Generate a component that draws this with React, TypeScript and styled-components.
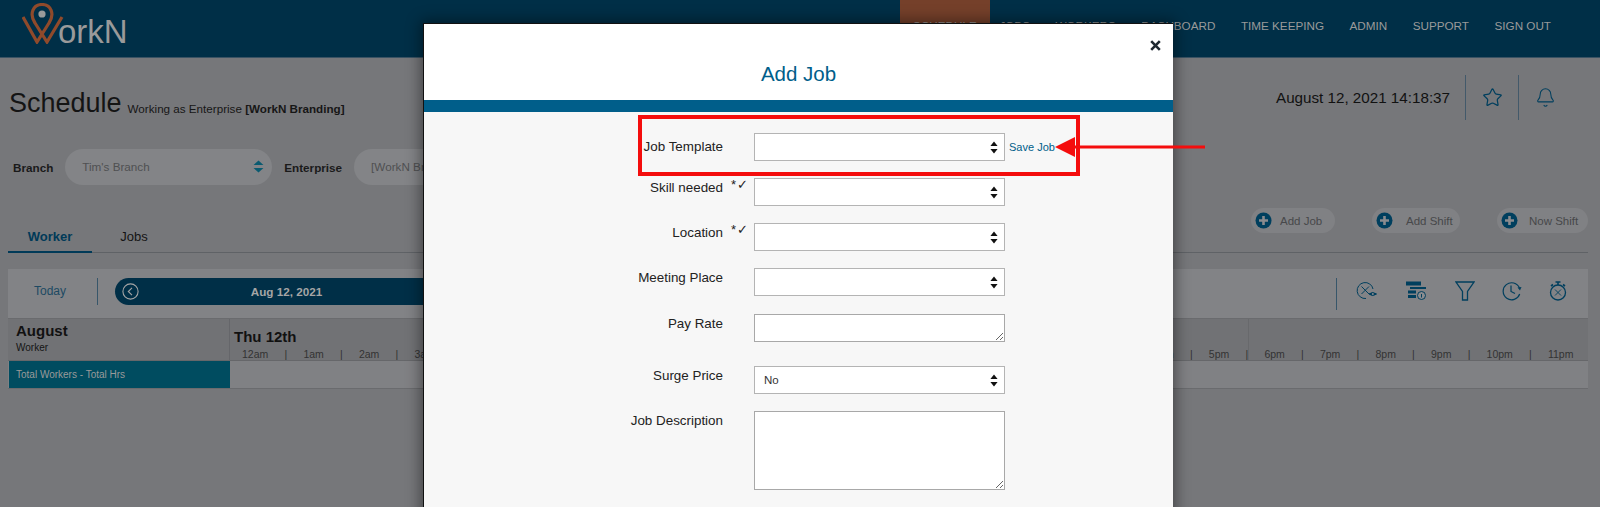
import { Fragment } from 'react';
import styled, { createGlobalStyle } from 'styled-components';
import { Star, Bell } from 'lucide-react';

const NAV_ITEMS = ['JOBS', 'WORKERS', 'DASHBOARD', 'TIME KEEPING', 'ADMIN', 'SUPPORT', 'SIGN OUT'];
const HOURS = [
  '12am', '1am', '2am', '3am', '4am', '5am', '6am', '7am', '8am', '9am', '10am', '11am',
  '12pm', '1pm', '2pm', '3pm', '4pm', '5pm', '6pm', '7pm', '8pm', '9pm', '10pm', '11pm',
];

const ICON = '#003f5e';

const SortArrows = ({ color = '#111', wide }: { color?: string; wide?: boolean }) => (
  <svg width={wide ? 11 : 8} height="13" viewBox="0 0 8 13" preserveAspectRatio="none">
    <path d="M4 0.5 L7.6 5 H0.4 Z M4 12.5 L0.4 8 H7.6 Z" fill={color} />
  </svg>
);

const AddIcon = () => (
  <svg width="17" height="17" viewBox="0 0 17 17">
    <circle cx="8.5" cy="8.5" r="8" fill="#003f5e" />
    <path d="M8.5 4 V13 M4 8.5 H13" stroke="#8a8b8e" strokeWidth="2.6" />
  </svg>
);

const Logo = () => (
  <svg width="42" height="41" viewBox="22 3 42 41" fill="none">
    <path
      d="M23 17 L37 42 L49 23 C55 14 51 4.5 42 4.5 C33 4.5 29 14 35 23 L47 42 L62 17"
      stroke="#8f4a2b"
      strokeWidth="3.2"
    />
    <circle cx="42" cy="14" r="3.6" fill="#9a9a9a" />
  </svg>
);

const HideIcon = () => (
  <svg width="22" height="20" viewBox="0 0 22 20" fill="none" stroke={ICON} strokeWidth="1">
    <path d="M17 8 A8 8 0 1 0 10 17.5" />
    <path d="M5.5 5.5 L13 13 M13 5.5 L5.5 13" />
    <path d="M13 13 Q16.5 10 20.5 13 Q16.5 16 13 13 Z" fill={ICON} />
    <circle cx="16.8" cy="13" r="1" fill="#8a8b8e" stroke="none" />
  </svg>
);

const BarsIcon = () => (
  <svg width="22" height="20" viewBox="0 0 22 20" fill={ICON}>
    <rect x="1" y="0.5" width="15" height="4" />
    <rect x="5" y="6" width="16" height="2" />
    <rect x="3" y="9.5" width="8" height="3" />
    <rect x="3" y="14" width="8" height="3" />
    <circle cx="16.5" cy="14.5" r="4" fill="#8a8b8e" stroke={ICON} strokeWidth="1" />
    <path d="M16.5 13 V16.5" stroke={ICON} strokeWidth="1" />
  </svg>
);

const FunnelIcon = () => (
  <svg width="20" height="20" viewBox="0 0 20 20" fill="none" stroke={ICON} strokeWidth="1.3">
    <path d="M1 1 H19 L12.5 10.5 V19 H7.5 V10.5 Z" />
  </svg>
);

const ClockIcon = () => (
  <svg width="20" height="20" viewBox="0 0 20 20" fill="none" stroke={ICON} strokeWidth="1.2">
    <path d="M17.5 7 A8.5 8.5 0 1 0 17.7 13" />
    <path d="M9 4.5 V10.5 L13 12.5" />
    <path d="M15.5 6.5 L19.5 6 L18 9.5 Z" fill={ICON} stroke="none" />
  </svg>
);

const TimerIcon = () => (
  <svg width="18" height="20" viewBox="0 0 18 20" fill="none" stroke={ICON} strokeWidth="1.3">
    <circle cx="9" cy="11.5" r="7.5" />
    <path d="M6 8.5 L12 14.5 M12 8.5 L6 14.5" strokeWidth="0.9" />
    <path d="M6.5 1 H11.5 M9 1 V4 M2 5 L4 3.5 M16 5 L14 3.5" strokeWidth="1.6" />
  </svg>
);

const PrevIcon = () => (
  <svg width="17" height="17" viewBox="0 0 17 17" fill="none" stroke="#a5a5a5" strokeWidth="1.1">
    <circle cx="8.5" cy="8.5" r="7.6" />
    <path d="M10 4.8 L6.3 8.5 L10 12.2" />
  </svg>
);

const Arrow = () => (
  <ArrowSvg width="152" height="22" viewBox="0 0 152 22">
    <path d="M20 11 H150" stroke="#f40d0d" strokeWidth="3" />
    <path d="M0 11 L20 1 V21 Z" fill="#f40d0d" />
  </ArrowSvg>
);

const App = () => {
  return (
    <Page>
      <GlobalStyle />
      <TopBar>
        <Brand>
          <Logo />
          <BrandText>orkN</BrandText>
        </Brand>
        <Nav>
          <ActiveNavItem>SCHEDULE</ActiveNavItem>
          {NAV_ITEMS.map((item) => (
            <NavItem key={item}>{item}</NavItem>
          ))}
        </Nav>
      </TopBar>

      <TitleRow>
        <Title>Schedule</Title>
        <Subtitle>
          Working as Enterprise <b>[WorkN Branding]</b>
        </Subtitle>
        <Status>
          <Clock>August 12, 2021 14:18:37</Clock>
          <HeaderIcon>
            <Star size={21} strokeWidth={1.4} />
          </HeaderIcon>
          <HeaderIcon>
            <Bell size={21} strokeWidth={1.2} />
          </HeaderIcon>
        </Status>
      </TitleRow>

      <FilterRow>
        <FilterLabel>Branch</FilterLabel>
        <FilterPill>
          Tim's Branch
          <SortArrows color="#0a5a70" wide />
        </FilterPill>
        <FilterLabel>Enterprise</FilterLabel>
        <FilterPill>[WorkN Branding]</FilterPill>
      </FilterRow>

      <TabRow>
        <ActiveTab>Worker</ActiveTab>
        <Tab>Jobs</Tab>
        <Actions>
          <ActionPill width={84} space={8}>
            <AddIcon />
            Add Job
          </ActionPill>
          <ActionPill width={88} space={13}>
            <AddIcon />
            Add Shift
          </ActionPill>
          <ActionPill width={91} space={11}>
            <AddIcon />
            Now Shift
          </ActionPill>
        </Actions>
      </TabRow>

      <Toolbar>
        <TodayButton>Today</TodayButton>
        <DatePill>
          <PrevIcon />
          <DateText>Aug 12, 2021</DateText>
        </DatePill>
        <ToolIcons>
          <HideIcon />
          <BarsIcon />
          <FunnelIcon />
          <ClockIcon />
          <TimerIcon />
        </ToolIcons>
      </Toolbar>

      <GridHeader>
        <MonthCell>
          <Month>August</Month>
          <MonthSub>Worker</MonthSub>
        </MonthCell>
        <DayCell>
          <DayName>Thu 12th</DayName>
          <Hours>
            {HOURS.map((hour, index) => (
              <Fragment key={hour}>
                <span>{hour}</span>
                {index < HOURS.length - 1 && <span>|</span>}
              </Fragment>
            ))}
          </Hours>
          <DayEnd />
        </DayCell>
      </GridHeader>
      <GridRow>
        <TotalCell>Total Workers - Total Hrs</TotalCell>
      </GridRow>

      <Modal>
        <ModalHead>
          <ModalTitle>Add Job</ModalTitle>
          <CloseButton>
            <svg width="11" height="11" viewBox="0 0 11 11">
              <path d="M1.2 1.2 L9.8 9.8 M9.8 1.2 L1.2 9.8" stroke="#1d2730" strokeWidth="2.6" />
            </svg>
          </CloseButton>
        </ModalHead>
        <ModalBar />
        <ModalBody>
          <Field top={21}>
            <FieldLabel offset={6}>Job Template</FieldLabel>
            <Marks />
            <SelectBox>
              <Select defaultValue="" aria-label="Job Template">
                <option value="" />
              </Select>
              <SelectArrow>
                <SortArrows />
              </SelectArrow>
            </SelectBox>
            <SaveLink>Save Job</SaveLink>
          </Field>
          <Field top={17}>
            <FieldLabel>Skill needed</FieldLabel>
            <Marks>*✓</Marks>
            <SelectBox>
              <Select defaultValue="" aria-label="Skill needed">
                <option value="" />
              </Select>
              <SelectArrow>
                <SortArrows />
              </SelectArrow>
            </SelectBox>
          </Field>
          <Field top={17}>
            <FieldLabel>Location</FieldLabel>
            <Marks>*✓</Marks>
            <SelectBox>
              <Select defaultValue="" aria-label="Location">
                <option value="" />
              </Select>
              <SelectArrow>
                <SortArrows />
              </SelectArrow>
            </SelectBox>
          </Field>
          <Field top={17}>
            <FieldLabel>Meeting Place</FieldLabel>
            <Marks />
            <SelectBox>
              <Select defaultValue="" aria-label="Meeting Place">
                <option value="" />
              </Select>
              <SelectArrow>
                <SortArrows />
              </SelectArrow>
            </SelectBox>
          </Field>
          <Field top={18}>
            <FieldLabel>Pay Rate</FieldLabel>
            <Marks />
            <TextArea height={28} aria-label="Pay Rate" />
          </Field>
          <Field top={24}>
            <FieldLabel>Surge Price</FieldLabel>
            <Marks />
            <SelectBox>
              <Select defaultValue="No" aria-label="Surge Price">
                <option value="No">No</option>
              </Select>
              <SelectArrow>
                <SortArrows />
              </SelectArrow>
            </SelectBox>
          </Field>
          <Field top={17}>
            <FieldLabel>Job Description</FieldLabel>
            <Marks />
            <TextArea height={79} aria-label="Job Description" />
          </Field>
        </ModalBody>
        <Highlight />
        <Arrow />
      </Modal>
    </Page>
  );
};
export default App;

const GlobalStyle = createGlobalStyle`
  html, body {
    margin: 0;
    height: 100%;
    overflow: hidden;
    background: #76777a;
  }
  * {
    box-sizing: border-box;
  }
  body {
    font-family: 'Liberation Sans', Arial, sans-serif;
  }
`;

const Page = styled.div`
  position: relative;
  height: 507px;
  overflow: hidden;
  color: #111;
`;

const TopBar = styled.div`
  display: flex;
  justify-content: space-between;
  height: 58px;
  background: #002f47;
  border-bottom: 1px solid #3a5364;
`;

const Brand = styled.div`
  display: flex;
  align-items: flex-end;
  padding: 3px 0 13px 22px;
`;

const BrandText = styled.div`
  margin-left: -6px;
  margin-bottom: -7px;
  font-size: 33px;
  font-weight: 400;
  color: #9a9a9a;
`;

const Nav = styled.div`
  display: flex;
  padding-right: 49px;
`;

const NavItem = styled.div`
  margin-left: 25.5px;
  padding-top: 18px;
  font-size: 11.7px;
  line-height: 16px;
  color: #9a9a9a;
`;

const ActiveNavItem = styled(NavItem)`
  width: 90px;
  margin-left: 0;
  margin-right: -16px;
  text-align: center;
  background: #75402a;
`;

const TitleRow = styled.div`
  display: flex;
  align-items: center;
  height: 90px;
  padding: 0 29px 0 9px;
`;

const Title = styled.div`
  margin-right: 6px;
  font-size: 27px;
  color: #141414;
`;

const Subtitle = styled.div`
  margin-top: 10px;
  font-size: 11.65px;
  color: #161616;
`;

const Status = styled.div`
  display: flex;
  align-items: center;
  margin-left: auto;
  margin-bottom: 12px;
`;

const Clock = styled.div`
  margin-right: 15px;
  font-size: 15.2px;
  color: #111;
`;

const HeaderIcon = styled.div`
  display: flex;
  align-items: center;
  justify-content: center;
  width: 53px;
  height: 45px;
  color: ${ICON};
  border-left: 1px solid #43596a;
`;

const FilterRow = styled.div`
  display: flex;
  align-items: center;
  height: 36px;
  margin-top: 1px;
  padding-left: 13px;
`;

const FilterLabel = styled.div`
  margin-right: 12px;
  font-size: 11.7px;
  font-weight: 700;
  color: #1a1a1a;
`;

const FilterPill = styled.div`
  display: flex;
  align-items: center;
  justify-content: space-between;
  width: 207px;
  height: 36px;
  margin-right: 12px;
  padding: 0 8px 2px 17px;
  font-size: 11.7px;
  color: #4f5052;
  background: #838487;
  border-radius: 18px;
`;

const TabRow = styled.div`
  display: flex;
  align-items: flex-end;
  height: 68px;
  margin: 0 12px 0 8px;
  border-bottom: 1px solid #5f6266;
`;

const Tab = styled.div`
  width: 84px;
  height: 25px;
  font-size: 13px;
  line-height: 20px;
  text-align: center;
  color: #141414;
`;

const ActiveTab = styled(Tab)`
  height: 26px;
  margin-bottom: -1px;
  font-weight: 700;
  color: #003a58;
  border-bottom: 2px solid #003a58;
`;

const Actions = styled.div`
  display: flex;
  gap: 37px;
  margin-left: auto;
  margin-bottom: 19px;
`;

const ActionPill = styled.div<{ width: number; space: number }>`
  display: flex;
  align-items: center;
  gap: ${({ space }) => space}px;
  width: ${({ width }) => width}px;
  height: 25px;
  padding-left: 4px;
  font-size: 11.5px;
  color: #47484a;
  background: #808184;
  border-radius: 13px;
`;

const Toolbar = styled.div`
  display: flex;
  align-items: center;
  height: 49px;
  margin: 16px 12px 0 8px;
  background: #828386;
`;

const TodayButton = styled.div`
  width: 90px;
  height: 27px;
  margin-bottom: 4px;
  padding-left: 26px;
  font-size: 12px;
  line-height: 27px;
  color: #1d4a63;
  border-right: 1px solid #37566a;
`;

const DatePill = styled.div`
  display: flex;
  align-items: center;
  width: 900px;
  height: 27px;
  margin: 0 0 4px 17px;
  padding-left: 7px;
  background: #002f47;
  border-radius: 14px 0 0 14px;
`;

const DateText = styled.div`
  width: 295px;
  font-size: 11.7px;
  font-weight: 700;
  text-align: center;
  color: #a5a5a5;
`;

const ToolIcons = styled.div`
  display: flex;
  align-items: center;
  justify-content: space-between;
  width: 252px;
  height: 32px;
  margin-left: auto;
  padding: 0 21px 5px 19px;
  border-left: 1px solid #37566a;
`;

const GridHeader = styled.div`
  display: flex;
  height: 43px;
  margin: 0 12px 0 8px;
  background: #717275;
  border-top: 1px solid #6a6b6e;
  border-bottom: 1px solid #66676a;
`;

const MonthCell = styled.div`
  width: 222px;
  padding: 3px 0 0 8px;
  border-right: 1px solid #65666a;
`;

const Month = styled.div`
  font-size: 15px;
  line-height: 17px;
  font-weight: 700;
  color: #111;
`;

const MonthSub = styled.div`
  margin-top: 2px;
  font-size: 10px;
  line-height: 13px;
  color: #141414;
`;

const DayCell = styled.div`
  position: relative;
  flex: 1;
  padding: 9px 14px 0 4px;
`;

const DayName = styled.div`
  font-size: 15px;
  line-height: 17px;
  font-weight: 700;
  color: #111;
`;

const Hours = styled.div`
  display: flex;
  justify-content: space-between;
  margin: 3px 0 0 8px;
  font-size: 10.5px;
  line-height: 13px;
  color: #333;
`;

const DayEnd = styled.div`
  position: absolute;
  top: 0;
  bottom: 0;
  left: 1018px;
  width: 1px;
  background: #68696c;
`;

const GridRow = styled.div`
  display: flex;
  height: 28px;
  margin: 0 12px 0 8px;
  background: #808184;
  border-bottom: 1px solid #6a6b6e;
`;

const TotalCell = styled.div`
  width: 221px;
  margin-left: 1px;
  padding-left: 7px;
  font-size: 10px;
  line-height: 27px;
  color: #9a9a9a;
  background: #004c60;
`;

const Modal = styled.div`
  position: absolute;
  top: 23px;
  left: 423px;
  width: 750px;
  height: 600px;
  background: #f7f7f7;
  box-shadow: 0 0 14px 2px rgba(0, 0, 0, 0.45);
  border-left: 1px solid #111;
  border-top: 1px solid #111;
`;

const ModalHead = styled.div`
  position: relative;
  height: 76px;
  padding-top: 37px;
  text-align: center;
  background: #fff;
`;

const ModalTitle = styled.div`
  font-size: 20.5px;
  line-height: 26px;
  color: #005e8a;
`;

const CloseButton = styled.div`
  position: absolute;
  top: 16px;
  right: 12px;
  display: flex;
`;

const ModalBar = styled.div`
  height: 12px;
  background: #005e8a;
`;

const ModalBody = styled.div`
  display: flex;
  flex-direction: column;
`;

const Field = styled.div<{ top: number }>`
  display: flex;
  align-items: flex-start;
  margin-top: ${({ top }) => top}px;
`;

const FieldLabel = styled.div<{ offset?: number }>`
  width: 299px;
  padding-top: ${({ offset }) => offset ?? 2}px;
  font-size: 13.4px;
  line-height: 15px;
  text-align: right;
  color: #222;
`;

const Marks = styled.div`
  width: 31px;
  padding-left: 8px;
  font-size: 13px;
  line-height: 14px;
  letter-spacing: 1px;
  color: #222;
`;

const SelectBox = styled.div`
  position: relative;
  width: 251px;
  height: 28px;
`;

const Select = styled.select`
  appearance: none;
  display: block;
  width: 100%;
  height: 100%;
  padding: 0 9px;
  font-family: inherit;
  font-size: 11.5px;
  color: #333;
  background: #fff;
  border: 1px solid #b4b4b4;
  border-radius: 0;
`;

const SelectArrow = styled.div`
  position: absolute;
  top: 8px;
  right: 7px;
  display: flex;
  pointer-events: none;
`;

const TextArea = styled.textarea<{ height: number }>`
  display: block;
  width: 251px;
  height: ${({ height }) => height}px;
  background: #fff;
  border: 1px solid #a8a8a8;
  border-radius: 0;
  outline: none;
`;

const SaveLink = styled.div`
  margin-left: 4px;
  font-size: 11px;
  line-height: 28px;
  color: #005e8a;
`;

const Highlight = styled.div`
  position: absolute;
  top: 91px;
  left: 214px;
  width: 442px;
  height: 61px;
  border: 4px solid #f40d0d;
  pointer-events: none;
`;

const ArrowSvg = styled.svg`
  position: absolute;
  top: 112px;
  left: 631px;
`;
